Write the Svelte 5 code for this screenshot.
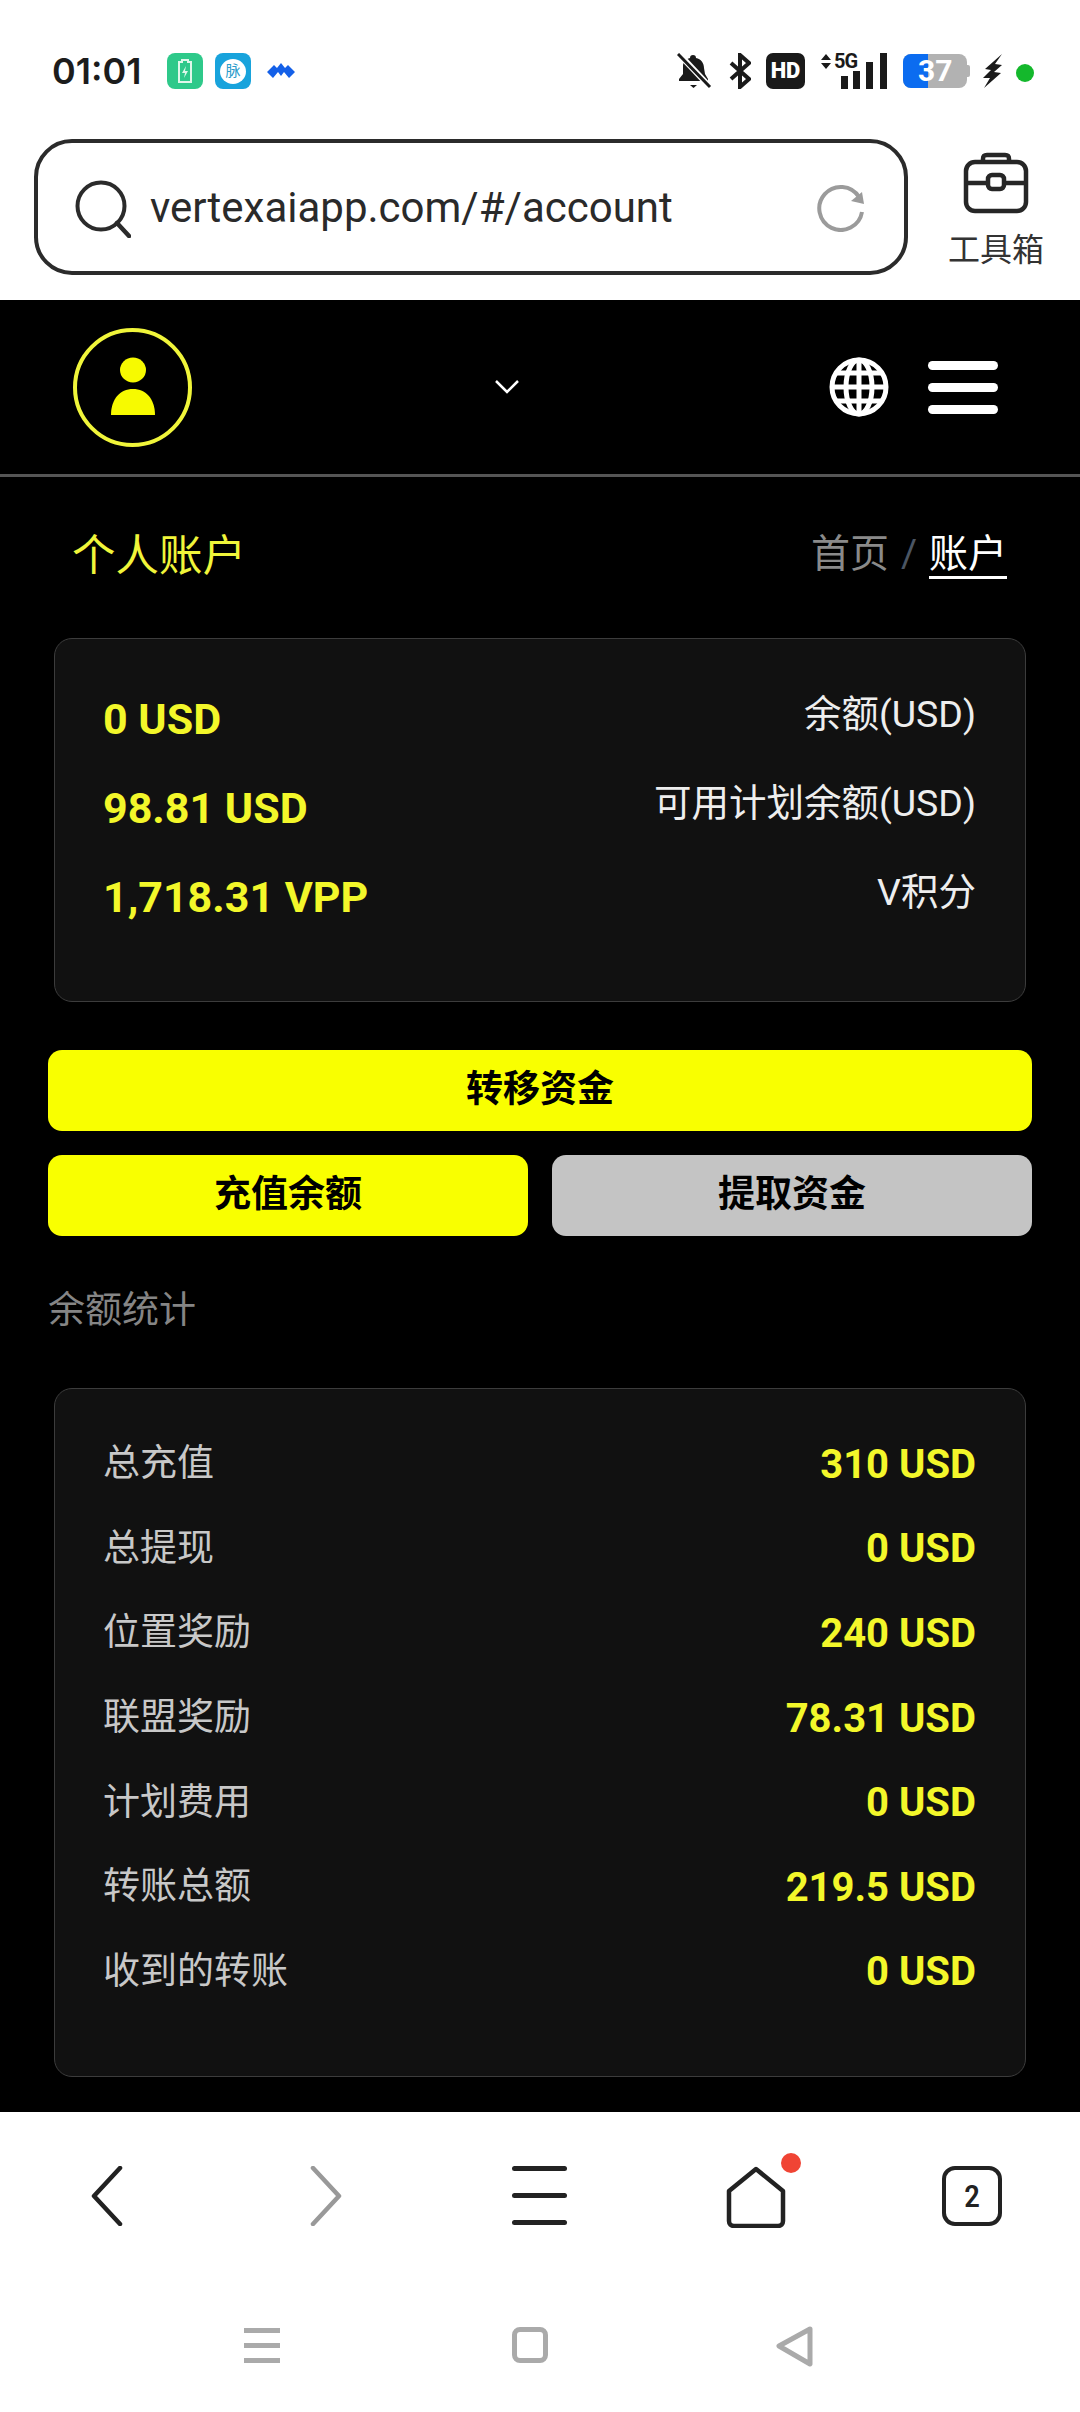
<script>
  const balances = [
    { value: '0 USD', label: '余额(USD)' },
    { value: '98.81 USD', label: '可用计划余额(USD)' },
    { value: '1,718.31 VPP', label: 'V积分' }
  ];

  const stats = [
    { label: '总充值', value: '310 USD' },
    { label: '总提现', value: '0 USD' },
    { label: '位置奖励', value: '240 USD' },
    { label: '联盟奖励', value: '78.31 USD' },
    { label: '计划费用', value: '0 USD' },
    { label: '转账总额', value: '219.5 USD' },
    { label: '收到的转账', value: '0 USD' }
  ];
</script>

<div class="phone">
  <div class="status">
    <span class="time">01:01</span>
    <span class="tile green">
      <svg width="16" height="24" viewBox="0 0 16 24">
        <path d="M5 1h6v2h3v20H2V3h3z" fill="none" stroke="#dff7ea" stroke-width="2" />
        <path d="M9 7l-4 7h3l-1 5 4-7H8z" fill="#dff7ea" />
      </svg>
    </span>
    <span class="tile blue"><span class="bubble">脉</span></span>
    <svg class="mountain" width="28" height="16" viewBox="0 0 28 16">
      <path d="M0 9L7 2l3 3 4-5 4 5 3-3 7 7-6 6-5-6-3 4-3-4-5 6z" fill="#1460e8" />
    </svg>

    <div class="status-right">
      <svg class="bell" width="35" height="36" viewBox="0 0 35 36">
        <path d="M16 2c2 0 3 1 3 3 5 1 8 5 8 10l1 6 3 5v2H2v-2l4-5V13c0-4 3-7 7-8 0-2 1-3 3-3z" fill="#1a1a1a" />
        <path d="M13 32h7l-3.500 3z" fill="#1a1a1a" />
        <path d="M2 1l31 33" stroke="#fff" stroke-width="6" />
        <path d="M1 1l32 33" stroke="#1a1a1a" stroke-width="3" />
      </svg>
      <svg class="bt" width="22" height="36" viewBox="0 0 22 36">
        <path d="M2 10l18 16-9 8V2l9 8L2 26" fill="none" stroke="#1a1a1a" stroke-width="4" />
      </svg>
      <span class="hd">HD</span>
      <span class="net">
        <svg width="12" height="15" viewBox="0 0 12 15"><path d="M6 0l5 6H1zM1 9h10l-5 6z" fill="#1a1a1a" /></svg>
        <span class="fiveg">5G</span>
        <span class="bar b1"></span>
        <span class="bar b2"></span>
        <span class="bar b3"></span>
        <span class="bar b4"></span>
      </span>
      <span class="battery"><span class="fill"></span><span class="pct">37</span></span>
      <span class="nub"></span>
      <svg class="bolt" width="21" height="36" viewBox="0 0 21 36">
        <path d="M20 1L3 16l6 1-8 8 7 0-6 10 17-15-7-1 8-7-7-1z" fill="#1a1a1a" />
      </svg>
      <span class="dot"></span>
    </div>
  </div>

  <div class="browser">
    <div class="url">
      <svg class="search" width="56" height="58" viewBox="0 0 56 58">
        <circle cx="26" cy="26" r="23.500" fill="none" stroke="#2b2b2b" stroke-width="4" />
        <path d="M42 43l12 13" stroke="#2b2b2b" stroke-width="4.500" stroke-linecap="round" />
      </svg>
      <span class="address">vertexaiapp.com/#/account</span>
      <svg class="reload" width="50" height="50" viewBox="0 0 50 50">
        <path d="M46 30A21.500 21.500 0 1 1 43 15" fill="none" stroke="#9b9b9b" stroke-width="4" />
        <path d="M35 19l13 3-2-12z" fill="#9b9b9b" />
      </svg>
    </div>
    <div class="toolbox">
      <svg width="66" height="62" viewBox="0 0 66 62">
        <rect x="3" y="10" width="60" height="49" rx="9" fill="none" stroke="#262626" stroke-width="4.500" />
        <path d="M20 10V7c0-3 1-4 4-4h18c3 0 4 1 4 4v3M3 31h60" fill="none" stroke="#262626" stroke-width="4.500" />
        <rect x="25" y="23" width="16" height="14" rx="4" fill="#fff" stroke="#262626" stroke-width="4.500" />
      </svg>
      <span>工具箱</span>
    </div>
  </div>

  <main class="page">
    <header class="topbar">
      <div class="avatar">
        <svg width="50" height="60" viewBox="0 0 50 60">
          <ellipse cx="25" cy="13" rx="13" ry="12.500" fill="#f7fa00" />
          <path d="M3 58c0-16 9-26 22-26s22 10 22 26z" fill="#f7fa00" />
        </svg>
      </div>
      <svg class="chevron" width="26" height="16" viewBox="0 0 26 16">
        <path d="M2 2l11 11L24 2" fill="none" stroke="#fff" stroke-width="2.500" />
      </svg>
      <svg class="globe" width="60" height="60" viewBox="0 0 60 60">
        <g fill="none" stroke="#fff" stroke-width="5">
          <circle cx="30" cy="30" r="27" />
          <ellipse cx="30" cy="30" rx="13" ry="27" />
          <path d="M30 2v56M3 30h54M7 16h46M7 44h46" />
        </g>
      </svg>
      <div class="burger"><span></span><span></span><span></span></div>
    </header>

    <div class="title-row">
      <h1>个人账户</h1>
      <nav class="crumbs"><span class="home">首页</span><span class="slash">/</span><span class="here">账户</span></nav>
    </div>

    <section class="card balances">
      {#each balances as row}
        <div class="row">
          <span class="value">{row.value}</span>
          <span class="label">{row.label}</span>
        </div>
      {/each}
    </section>

    <div class="actions">
      <button class="wide">转移资金</button>
      <button>充值余额</button>
      <button class="grey">提取资金</button>
    </div>

    <h2>余额统计</h2>

    <section class="card stats">
      {#each stats as row}
        <div class="row">
          <span class="label">{row.label}</span>
          <span class="value">{row.value}</span>
        </div>
      {/each}
    </section>
  </main>

  <div class="bottom-nav">
    <svg class="ic back" width="32" height="60" viewBox="0 0 32 60">
      <path d="M29 2L3 30l26 28" fill="none" stroke="#222" stroke-width="4.500" stroke-linecap="round" stroke-linejoin="round" />
    </svg>
    <svg class="ic forward" width="32" height="60" viewBox="0 0 32 60">
      <path d="M3 2l26 28L3 58" fill="none" stroke="#999" stroke-width="4.500" stroke-linecap="round" stroke-linejoin="round" />
    </svg>
    <div class="lines"><span></span><span></span><span></span></div>
    <div class="home-btn">
      <svg width="60" height="62" viewBox="0 0 60 62">
        <path d="M30 3L3 25v30c0 3 2 5 5 5h44c3 0 5-2 5-5V25z" fill="none" stroke="#222" stroke-width="4.500" stroke-linejoin="round" />
      </svg>
      <span class="badge"></span>
    </div>
    <div class="tabs">2</div>
  </div>

  <div class="system-nav">
    <div class="sys-lines"><span></span><span></span><span></span></div>
    <span class="sys-square"></span>
    <svg width="37" height="41" viewBox="0 0 37 41">
      <path d="M34 3L3 20l31 18z" fill="none" stroke="#aaa" stroke-width="5" stroke-linejoin="round" />
    </svg>
  </div>
</div>

<style>
  :global(body) {
    background: #fff;
  }

  .phone {
    width: 1080px;
    height: 2412px;
    display: flex;
    flex-direction: column;
    overflow: hidden;
    font-family: Roboto, "Noto Sans CJK SC", sans-serif;
    background: #fff;
  }

  /* status bar */
  .status {
    height: 139px;
    flex: none;
    box-sizing: border-box;
    padding: 53px 46px 0 52px;
    display: flex;
    align-items: flex-start;
  }

  .time {
    font-family: Inter, Roboto, sans-serif;
    font-size: 36px;
    font-weight: 600;
    line-height: 36px;
    color: #1c1c1c;
    width: 115px;
  }

  .tile {
    width: 36px;
    height: 36px;
    border-radius: 8px;
    margin-right: 12px;
    display: flex;
    align-items: center;
    justify-content: center;
  }

  .green {
    background: #2ec98a;
  }

  .blue {
    background: #18a3dc;
  }

  .bubble {
    width: 26px;
    height: 25px;
    border-radius: 50%;
    background: #fff;
    color: #2a9ccb;
    font-size: 15px;
    line-height: 25px;
    text-align: center;
  }

  .mountain {
    margin: 10px 0 0 4px;
  }

  .status-right {
    margin-left: auto;
    display: flex;
    align-items: flex-start;
  }

  .bell {
    margin-right: 17px;
  }

  .bt {
    margin-right: 15px;
  }

  .hd {
    width: 39px;
    height: 36px;
    border-radius: 7px;
    background: #1a1a1a;
    color: #fff;
    font-size: 22px;
    font-weight: 900;
    line-height: 36px;
    text-align: center;
    margin-right: 15px;
  }

  .net {
    width: 67px;
    height: 36px;
    position: relative;
    margin-right: 16px;
  }

  .net svg {
    position: absolute;
    left: 0;
    top: 1px;
  }

  .fiveg {
    position: absolute;
    left: 14px;
    top: -2px;
    font-size: 20px;
    line-height: 20px;
    font-weight: 700;
    letter-spacing: -1px;
    color: #1a1a1a;
  }

  .bar {
    position: absolute;
    bottom: 0;
    width: 7px;
    background: #1a1a1a;
  }

  .b1 {
    left: 21px;
    height: 13px;
  }

  .b2 {
    left: 33px;
    height: 18px;
  }

  .b3 {
    left: 46px;
    height: 27px;
  }

  .b4 {
    left: 60px;
    height: 36px;
  }

  .battery {
    width: 64px;
    height: 34px;
    margin-top: 1px;
    border-radius: 8px;
    background: #b2b2b2;
    position: relative;
    overflow: hidden;
  }

  .nub {
    width: 3px;
    height: 12px;
    margin-top: 12px;
    margin-right: 12px;
    border-radius: 0 2px 2px 0;
    background: #b2b2b2;
  }

  .fill {
    position: absolute;
    left: 0;
    top: 0;
    bottom: 0;
    width: 25px;
    background: #0b6cf0;
  }

  .pct {
    position: absolute;
    left: 15px;
    top: 0;
    font-size: 30px;
    font-weight: 700;
    line-height: 34px;
    color: #fff;
  }

  .bolt {
    margin-right: 13px;
  }

  .dot {
    width: 18px;
    height: 18px;
    margin-top: 11px;
    border-radius: 50%;
    background: #14b82c;
  }

  /* browser bar */
  .browser {
    height: 161px;
    flex: none;
    display: flex;
    align-items: flex-start;
    padding-left: 34px;
  }

  .url {
    width: 874px;
    height: 136px;
    box-sizing: border-box;
    border: 4px solid #2b2b2b;
    border-radius: 38px;
    display: flex;
    align-items: center;
    padding-left: 37px;
  }

  .search {
    margin-top: 4px;
  }

  .address {
    font-size: 42px;
    color: #2a2a2a;
    margin-left: 19px;
  }

  .reload {
    margin-left: auto;
    margin-right: 38px;
  }

  .toolbox {
    margin-left: 40px;
    margin-top: 13px;
    width: 96px;
    display: flex;
    flex-direction: column;
    align-items: center;
    color: #333;
    font-size: 32px;
    line-height: 36px;
    gap: 18px;
    white-space: nowrap;
  }

  /* page */
  .page {
    height: 1812px;
    flex: none;
    background: #000;
    display: flex;
    flex-direction: column;
  }

  .topbar {
    height: 177px;
    flex: none;
    box-sizing: border-box;
    border-bottom: 3px solid #555;
    display: flex;
    align-items: center;
    padding: 0 82px 0 73px;
  }

  .avatar {
    width: 119px;
    height: 119px;
    box-sizing: border-box;
    border: 4px solid #f0f53a;
    border-radius: 50%;
    display: flex;
    justify-content: center;
    align-items: center;
  }

  .chevron {
    margin-left: 302px;
  }

  .globe {
    margin-left: auto;
  }

  .burger {
    margin-left: 39px;
    display: flex;
    flex-direction: column;
    gap: 13px;
  }

  .burger span {
    width: 70px;
    height: 9px;
    border-radius: 5px;
    background: #fff;
  }

  .title-row {
    height: 161px;
    flex: none;
    box-sizing: border-box;
    display: flex;
    justify-content: space-between;
    align-items: center;
    padding: 0 73px 5px 72px;
  }

  h1 {
    margin: 0 0 6px;
    font-size: 43.500px;
    font-weight: 400;
    color: #f0f53a;
  }

  .crumbs {
    font-size: 39px;
    line-height: 44px;
    display: flex;
    align-items: flex-start;
  }

  .home {
    color: #8a8a8a;
  }

  .slash {
    color: #4b5563;
    margin: 0 12px;
  }

  .here {
    color: #fff;
    border-bottom: 3px solid #fff;
  }

  .card {
    margin: 0 54px;
    box-sizing: border-box;
    background: #111;
    border: 1px solid #3c3c3c;
    border-radius: 18px;
    flex: none;
  }

  .balances {
    height: 364px;
    padding: 35px 49px 0 48px;
  }

  .balances .row {
    height: 89px;
  }

  .stats {
    height: 689px;
    padding: 33px 49px 0 48px;
  }

  .stats .row {
    height: 84.600px;
  }

  .row {
    display: flex;
    justify-content: space-between;
    align-items: center;
  }

  .value {
    font-size: 40px;
    font-weight: 700;
    color: #f3f72a;
  }

  .balances .value {
    font-size: 43px;
  }

  .label {
    font-size: 37px;
    padding-bottom: 8px;
  }

  .balances .label {
    font-size: 37.500px;
    padding-bottom: 16px;
    color: #eee;
  }

  .stats .label {
    color: #c8c8c8;
  }

  .actions {
    margin: 48px 48px 0;
    display: grid;
    grid-template-columns: 480px 480px;
    gap: 24px;
  }

  button {
    height: 81px;
    border: none;
    border-radius: 14px;
    background: #f9ff00;
    color: #000;
    font-family: inherit;
    font-size: 37px;
    font-weight: 700;
    padding: 0 0 10px;
  }

  .wide {
    grid-column: 1 / 3;
  }

  .grey {
    background: #c4c4c4;
  }

  h2 {
    margin: 50px 48px 0;
    height: 102px;
    font-size: 37px;
    font-weight: 400;
    line-height: 50px;
    color: #858585;
  }

  /* bottom bars */
  .bottom-nav {
    height: 175px;
    flex: none;
    box-sizing: border-box;
    display: flex;
    align-items: flex-start;
    padding-top: 54px;
    position: relative;
  }

  .back {
    margin-left: 91px;
  }

  .forward {
    margin-left: 187px;
  }

  .lines {
    margin-left: 170px;
    margin-top: 0;
    display: flex;
    flex-direction: column;
    gap: 22px;
  }

  .lines span {
    width: 55px;
    height: 5px;
    border-radius: 3px;
    background: #222;
  }

  .home-btn {
    margin-left: 159px;
    position: relative;
  }

  .badge {
    position: absolute;
    right: -15px;
    top: -13px;
    width: 20px;
    height: 20px;
    border-radius: 50%;
    background: #f04434;
  }

  .tabs {
    margin-left: 156px;
    width: 60px;
    height: 60px;
    box-sizing: border-box;
    border: 4px solid #222;
    border-radius: 13px;
    font-family: "Roboto Condensed", Roboto, sans-serif;
    font-size: 32px;
    font-weight: 500;
    line-height: 52px;
    text-align: center;
    color: #222;
  }

  .system-nav {
    height: 125px;
    flex: none;
    display: flex;
    align-items: flex-start;
    padding-top: 40px;
    box-sizing: border-box;
  }

  .sys-lines {
    margin-left: 244px;
    margin-top: 1px;
    display: flex;
    flex-direction: column;
    gap: 10px;
  }

  .sys-lines span {
    width: 36px;
    height: 5px;
    background: #aaa;
  }

  .sys-square {
    margin-left: 232px;
    width: 36px;
    height: 36px;
    box-sizing: border-box;
    border: 5px solid #aaa;
    border-radius: 8px;
  }

  .system-nav svg {
    margin-left: 228px;
    margin-top: -1px;
  }
</style>
